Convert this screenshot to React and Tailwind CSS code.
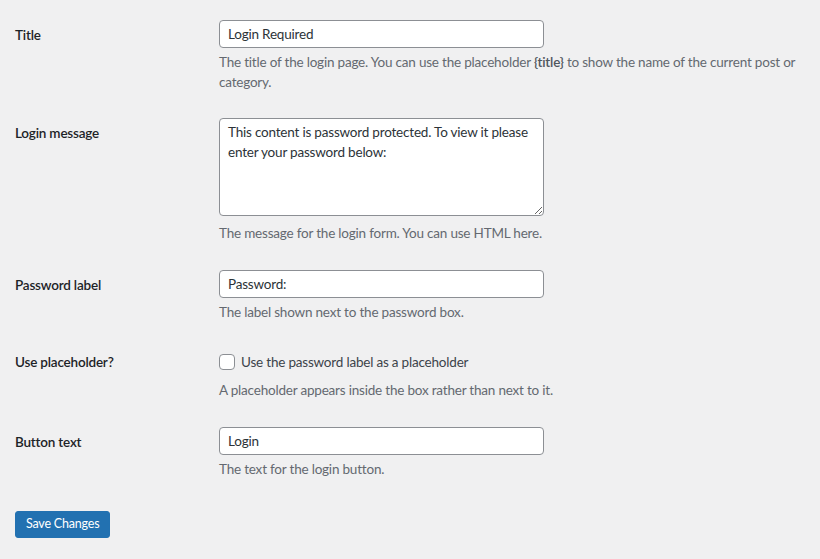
import React from 'react'

// Settings rows for the login form
function Row({ label, children, className = '' }) {
  return (
    <div className={`flex ${className}`}>
      <div className="w-[204px] shrink-0 pt-[5px] text-[13.5px] leading-[20px] tracking-[-0.2px] font-semibold text-[#1d2327]">
        {label}
      </div>
      <div className="flex-1 min-w-0">{children}</div>
    </div>
  )
}

function Desc({ children, className = 'mt-1' }) {
  return <p className={`text-[13.5px] leading-[20px] tracking-[-0.2px] text-[#646970] ${className}`}>{children}</p>
}

function TextInput({ value }) {
  return (
    <input
      type="text"
      defaultValue={value}
      className="block w-[325px] h-[28px] px-2 rounded-[4px] border border-[#8c8f94] bg-white text-[13.5px] tracking-[-0.2px] text-[#2c3338] outline-none"
    />
  )
}

export default function App() {
  return (
    <div className="min-h-[559px] bg-[#f0f0f1] pl-[15px] pr-[10px] pt-5 font-['Lato',sans-serif]">
      <div className="flex flex-col">
        <Row label="Title">
          <TextInput value="Login Required" />
          <Desc>
            The title of the login page. You can use the placeholder <strong className="font-semibold text-[#50575e]">{'{title}'}</strong> to
            show the name of the current post or category.
          </Desc>
        </Row>

        <Row label="Login message" className="mt-[26px]">
          <textarea
            rows={4}
            defaultValue="This content is password protected. To view it please enter your password below:"
            className="block w-[325px] h-[98px] px-2 py-[3px] rounded-[4px] border border-[#8c8f94] bg-white text-[13.5px] leading-[20px] tracking-[-0.2px] text-[#2c3338] outline-none"
          />
          <Desc className="mt-[7px]">The message for the login form. You can use HTML here.</Desc>
        </Row>

        <Row label="Password label" className="mt-[27px]">
          <TextInput value="Password:" />
          <Desc>The label shown next to the password box.</Desc>
        </Row>

        <Row label="Use placeholder?" className="mt-[25px]">
          <label className="flex items-center gap-[6px] h-[30px] text-[13.5px] tracking-[-0.2px] text-[#3c434a]">
            <input
              type="checkbox"
              className="appearance-none w-4 h-4 rounded-[4px] border border-[#8c8f94] bg-white"
            />
            Use the password label as a placeholder
          </label>
          <Desc className="mt-[3px]">A placeholder appears inside the box rather than next to it.</Desc>
        </Row>

        <Row label="Button text" className="mt-[27px]">
          <TextInput value="Login" />
          <Desc>The text for the login button.</Desc>
        </Row>

        <div className="mt-[31px]">
          <button
            type="button"
            className="h-[27px] px-[10px] rounded-[3px] bg-[#2271b1] border border-[#2271b1] text-white text-[12.5px] tracking-[-0.2px] leading-none"
          >
            Save Changes
          </button>
        </div>
      </div>
    </div>
  )
}
